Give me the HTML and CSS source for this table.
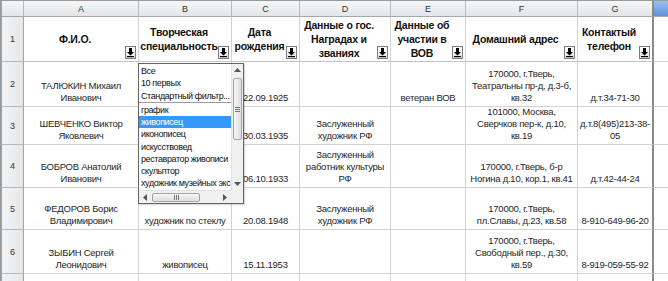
FILE: index.html
```html
<!DOCTYPE html>
<html lang="ru">
<head>
<meta charset="utf-8">
<title>Лист</title>
<link rel="stylesheet" href="styles.css">
</head>
<body>
<div class="sheet">
  <!-- column headers -->
  <div class="ch corner"></div>
  <div class="ch">A</div>
  <div class="ch">B</div>
  <div class="ch">C</div>
  <div class="ch">D</div>
  <div class="ch">E</div>
  <div class="ch">F</div>
  <div class="ch g">G</div>
  <div class="ch sel-col"></div>

  <!-- row 1 -->
  <div class="rh">1</div>
  <div class="c h">Ф.И.О.<span class="fb"><svg viewBox="0 0 9 11" width="9" height="11"><path d="M3 1h3v4h2L4.5 8.5 1 5h2z" fill="#000"/><rect x="1" y="9" width="7" height="1.2" fill="#000"/></svg></span></div>
  <div class="c h">Творческая<br>специальность<span class="fb"><svg viewBox="0 0 9 11" width="9" height="11"><path d="M3 1h3v4h2L4.5 8.5 1 5h2z" fill="#000"/><rect x="1" y="9" width="7" height="1.2" fill="#000"/></svg></span></div>
  <div class="c h">Дата<br>рождения<span class="fb"><svg viewBox="0 0 9 11" width="9" height="11"><path d="M3 1h3v4h2L4.5 8.5 1 5h2z" fill="#000"/><rect x="1" y="9" width="7" height="1.2" fill="#000"/></svg></span></div>
  <div class="c h">Данные о гос.<br>Наградах и<br>званиях<span class="fb"><svg viewBox="0 0 9 11" width="9" height="11"><path d="M3 1h3v4h2L4.5 8.5 1 5h2z" fill="#000"/><rect x="1" y="9" width="7" height="1.2" fill="#000"/></svg></span></div>
  <div class="c h">Данные об<br>участии в<br>ВОВ<span class="fb"><svg viewBox="0 0 9 11" width="9" height="11"><path d="M3 1h3v4h2L4.5 8.5 1 5h2z" fill="#000"/><rect x="1" y="9" width="7" height="1.2" fill="#000"/></svg></span></div>
  <div class="c h">Домашний адрес<span class="fb"><svg viewBox="0 0 9 11" width="9" height="11"><path d="M3 1h3v4h2L4.5 8.5 1 5h2z" fill="#000"/><rect x="1" y="9" width="7" height="1.2" fill="#000"/></svg></span></div>
  <div class="c h g">Контактый<br>телефон<span class="fb"><svg viewBox="0 0 9 11" width="9" height="11"><path d="M3 1h3v4h2L4.5 8.5 1 5h2z" fill="#000"/><rect x="1" y="9" width="7" height="1.2" fill="#000"/></svg></span></div>
  <div class="c x"></div>

  <!-- row 2 -->
  <div class="rh">2</div>
  <div class="c">ТАЛЮКИН Михаил<br>Иванович</div>
  <div class="c"></div>
  <div class="c">22.09.1925</div>
  <div class="c"></div>
  <div class="c">ветеран ВОВ</div>
  <div class="c">170000, г.Тверь,<br>Театральны пр-д, д.3-б,<br>кв.32</div>
  <div class="c g">д.т.34-71-30</div>
  <div class="c x"></div>

  <!-- row 3 -->
  <div class="rh">3</div>
  <div class="c">ШЕВЧЕНКО Виктор<br>Яковлевич</div>
  <div class="c"></div>
  <div class="c">30.03.1935</div>
  <div class="c">Заслуженный<br>художник РФ</div>
  <div class="c"></div>
  <div class="c">101000, Москва,<br>Сверчков пер-к, д.10,<br>кв.19</div>
  <div class="c g">д.т.8(495)213-38-<br>05</div>
  <div class="c x"></div>

  <!-- row 4 -->
  <div class="rh">4</div>
  <div class="c">БОБРОВ Анатолий<br>Иванович</div>
  <div class="c"></div>
  <div class="c">06.10.1933</div>
  <div class="c">Заслуженный<br>работник культуры<br>РФ</div>
  <div class="c"></div>
  <div class="c">170000, г.Тверь, б-р<br>Ногина д.10, кор.1, кв.41</div>
  <div class="c g">д.т.42-44-24</div>
  <div class="c x"></div>

  <!-- row 5 -->
  <div class="rh">5</div>
  <div class="c">ФЕДОРОВ Борис<br>Владимирович</div>
  <div class="c">художник по стеклу</div>
  <div class="c">20.08.1948</div>
  <div class="c">Заслуженный<br>художник РФ</div>
  <div class="c"></div>
  <div class="c">170000, г.Тверь,<br>пл.Славы, д.23, кв.58</div>
  <div class="c g">8-910-649-96-20</div>
  <div class="c x"></div>

  <!-- row 6 -->
  <div class="rh">6</div>
  <div class="c">ЗЫБИН Сергей<br>Леонидович</div>
  <div class="c">живописец</div>
  <div class="c">15.11.1953</div>
  <div class="c"></div>
  <div class="c"></div>
  <div class="c">170000, г.Тверь,<br>Свободный пер., д.30,<br>кв.59</div>
  <div class="c g">8-919-059-55-92</div>
  <div class="c x"></div>

  <!-- row 7 (partial) -->
  <div class="rh"></div>
  <div class="c"></div>
  <div class="c"></div>
  <div class="c"></div>
  <div class="c"></div>
  <div class="c"></div>
  <div class="c"></div>
  <div class="c g"></div>
  <div class="c x"></div>

  <!-- autofilter dropdown -->
  <div class="dd">
    <div class="list">
      <div class="it">Все</div>
      <div class="it">10 первых</div>
      <div class="it">Стандартный фильтр...</div>
      <div class="sep"></div>
      <div class="it">график</div>
      <div class="it sel">живописец</div>
      <div class="it">иконописец</div>
      <div class="it">искусствовед</div>
      <div class="it">реставратор живописи</div>
      <div class="it">скульптор</div>
      <div class="it">художник музейных экс</div>
    </div>
    <div class="vs">
      <svg class="arr" viewBox="0 0 7 4" width="7" height="4"><path d="M0 4L3.5 0 7 4z" fill="#555"/></svg>
      <div class="vthumb"><span></span><span></span><span></span></div>
      <svg class="arr down" viewBox="0 0 7 4" width="7" height="4"><path d="M0 0L3.5 4 7 0z" fill="#555"/></svg>
    </div>
    <div class="hs">
      <svg class="harr" viewBox="0 0 4 7" width="4" height="7"><path d="M4 0L0 3.5 4 7z" fill="#555"/></svg>
      <div class="hthumb"><span></span><span></span><span></span></div>
      <svg class="harr right" viewBox="0 0 4 7" width="4" height="7"><path d="M0 0L4 3.5 0 7z" fill="#555"/></svg>
    </div>
    <div class="corner-box"></div>
  </div>
</div>
</body>
</html>
```

FILE: styles.css
```css
* {
  box-sizing: border-box;
  margin: 0;
  padding: 0;
}

body {
  margin: 0;
  width: 668px;
  height: 281px;
  overflow: hidden;
  background: #ffffff;
  font-family: "Liberation Sans", Arial, sans-serif;
}

.sheet {
  position: relative;
  display: grid;
  grid-template-columns: 24px 115px 93px 68px 91px 75px 112px 76px 14px;
  grid-template-rows: 16px 45px 45px 38px 43px 42px 44px 20px;
  border-top: 1px solid #9a9a9a;
}

/* column header strip */
.ch {
  background: linear-gradient(#f6f7f8, #e3e5e8);
  border-right: 1px solid #b8babd;
  border-bottom: 1px solid #a6a8ab;
  display: flex;
  align-items: center;
  justify-content: center;
  font-size: 9px;
  color: #333;
}

.corner {
  border-left: 2px solid #9c9c9c;
}

.ch.g {
  border-right: 2px solid #8a8a8a;
}

.sel-col {
  background: linear-gradient(#9cc0ee, #5f92d8);
  border-right: none;
}

/* row headers */
.rh {
  background: linear-gradient(90deg, #f3f4f5, #e6e8ea);
  border-left: 2px solid #9c9c9c;
  border-right: 1px solid #a2a4a7;
  border-bottom: 1px solid #b8babd;
  display: flex;
  align-items: center;
  justify-content: center;
  font-size: 9px;
  color: #333;
}

/* data cells */
.c {
  border-right: 1px solid #d3d3d3;
  border-bottom: 1px solid #d3d3d3;
  display: flex;
  flex-direction: column;
  justify-content: flex-end;
  text-align: center;
  font-size: 9.5px;
  letter-spacing: -0.25px;
  line-height: 12px;
  color: #262626;
  padding: 0 0 2px;
  white-space: nowrap;
  overflow: hidden;
}

.c.g {
  border-right: 2px solid #8a8a8a;
}

.c.x {
  border-right: none;
}

/* header row 1 */
.c.h {
  position: relative;
  justify-content: center;
  font-size: 10.5px;
  letter-spacing: -0.2px;
  font-weight: bold;
  line-height: 14px;
  color: #111;
  padding: 0 12px 0 0;
  border-bottom-color: #c4c4c4;
}

.fb {
  position: absolute;
  right: 2px;
  bottom: 2px;
  width: 11px;
  height: 13px;
  border: 1px solid #7c7c7c;
  background: linear-gradient(#ffffff, #e4e4e4);
  display: flex;
  align-items: center;
  justify-content: center;
}

/* autofilter dropdown */
.dd {
  position: absolute;
  left: 138px;
  top: 62px;
  width: 106px;
  height: 141px;
  border: 1px solid #646464;
  background: #ffffff;
  display: grid;
  grid-template-columns: 1fr 12px;
  grid-template-rows: 1fr 13px;
  box-shadow: 1px 1px 1px rgba(0, 0, 0, 0.15);
}

.list {
  overflow: hidden;
  padding-top: 1px;
  font-size: 9px;
  letter-spacing: -0.4px;
  color: #111;
}

.it {
  height: 12.25px;
  line-height: 12.25px;
  padding-left: 2px;
  white-space: nowrap;
  overflow: hidden;
}

.it.sel {
  background: #3399ff;
  color: #ffffff;
}

.sep {
  height: 1px;
  background: #9c9c9c;
  margin: 0 0 1px;
}

.vs {
  background: #f0f0f0;
  border-left: 1px solid #e2e2e2;
  display: flex;
  flex-direction: column;
  align-items: center;
  padding-top: 4px;
}

.arr.down {
  margin-top: auto;
  margin-bottom: 4px;
}

.vthumb {
  margin-top: 6px;
  width: 9px;
  height: 62px;
  border: 1px solid #a4a4a4;
  border-radius: 2px;
  background: linear-gradient(90deg, #f6f6f6, #dedede);
  display: flex;
  flex-direction: column;
  align-items: center;
  justify-content: center;
  gap: 1px;
}

.vthumb span {
  display: block;
  width: 5px;
  height: 1px;
  background: #777;
}

.hs {
  background: #f0f0f0;
  border-top: 1px solid #e2e2e2;
  display: flex;
  align-items: center;
  padding: 0 4px;
}

.harr.right {
  margin-left: auto;
}

.hthumb {
  margin-left: 5px;
  width: 48px;
  height: 9px;
  border: 1px solid #a4a4a4;
  border-radius: 2px;
  background: linear-gradient(#f6f6f6, #dedede);
  display: flex;
  align-items: center;
  justify-content: center;
  gap: 1px;
}

.hthumb span {
  display: block;
  width: 1px;
  height: 5px;
  background: #777;
}

.corner-box {
  background: #f0f0f0;
}
```
